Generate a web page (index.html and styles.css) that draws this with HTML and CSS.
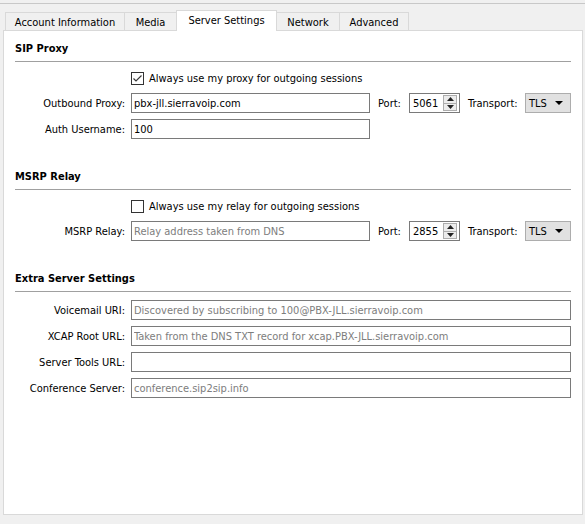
FILE: index.html
```html
<!DOCTYPE html>
<html lang="en">
<head>
<meta charset="utf-8">
<title>Account Settings</title>
<link rel="stylesheet" href="styles.css">
</head>
<body>
<div class="topline"></div>
<div class="tabbar">
  <div class="tab t-account">Account Information</div>
  <div class="tab t-media">Media</div>
  <div class="tab t-server active">Server Settings</div>
  <div class="tab t-network">Network</div>
  <div class="tab t-advanced">Advanced</div>
</div>
<div class="panel">
  <div class="section-title first">SIP Proxy</div>
  <div class="row check-row">
    <span class="spacer"></span>
    <span class="checkbox"><svg width="11" height="11" viewBox="0 0 11 11"><polyline points="1.5,5.5 4,8 9.5,2.5" fill="none" stroke="#3a3a3a" stroke-width="1.2"/></svg></span>
    <span class="check-text">Always use my proxy for outgoing sessions</span>
  </div>
  <div class="row gap5">
    <span class="lbl">Outbound Proxy:</span>
    <input class="field main" type="text" value="pbx-jll.sierravoip.com">
    <span class="port-lbl">Port:</span>
    <div class="spin"><span class="spin-val">5061</span><span class="spin-btns"><span class="sb up"><svg width="7" height="4" viewBox="0 0 7 4"><polygon points="0,4 7,4 3.5,0" fill="#222"/></svg></span><span class="sb down"><svg width="7" height="4" viewBox="0 0 7 4"><polygon points="0,0 7,0 3.5,4" fill="#222"/></svg></span></span></div>
    <span class="tr-lbl">Transport:</span>
    <div class="combo"><span>TLS</span><svg width="8" height="4" viewBox="0 0 8 4"><polygon points="0,0 8,0 4,4" fill="#000"/></svg></div>
  </div>
  <div class="row gap6">
    <span class="lbl">Auth Username:</span>
    <input class="field main" type="text" value="100">
  </div>

  <div class="section-title">MSRP Relay</div>
  <div class="row check-row">
    <span class="spacer"></span>
    <span class="checkbox"></span>
    <span class="check-text">Always use my relay for outgoing sessions</span>
  </div>
  <div class="row gap5">
    <span class="lbl">MSRP Relay:</span>
    <input class="field main" type="text" placeholder="Relay address taken from DNS">
    <span class="port-lbl">Port:</span>
    <div class="spin"><span class="spin-val">2855</span><span class="spin-btns"><span class="sb up"><svg width="7" height="4" viewBox="0 0 7 4"><polygon points="0,4 7,4 3.5,0" fill="#222"/></svg></span><span class="sb down"><svg width="7" height="4" viewBox="0 0 7 4"><polygon points="0,0 7,0 3.5,4" fill="#222"/></svg></span></span></div>
    <span class="tr-lbl">Transport:</span>
    <div class="combo"><span>TLS</span><svg width="8" height="4" viewBox="0 0 8 4"><polygon points="0,0 8,0 4,4" fill="#000"/></svg></div>
  </div>

  <div class="section-title">Extra Server Settings</div>
  <div class="row gap8">
    <span class="lbl">Voicemail URI:</span>
    <input class="field wide" type="text" placeholder="Discovered by subscribing to 100@PBX-JLL.sierravoip.com">
  </div>
  <div class="row gap6">
    <span class="lbl">XCAP Root URL:</span>
    <input class="field wide" type="text" placeholder="Taken from the DNS TXT record for xcap.PBX-JLL.sierravoip.com">
  </div>
  <div class="row gap6">
    <span class="lbl">Server Tools URL:</span>
    <input class="field wide" type="text">
  </div>
  <div class="row gap6">
    <span class="lbl">Conference Server:</span>
    <input class="field wide" type="text" placeholder="conference.sip2sip.info">
  </div>
</div>
</body>
</html>
```
FILE: styles.css
```css
* { box-sizing: border-box; }
html, body {
  margin: 0;
  padding: 0;
  background: #f0f0f0;
  width: 585px;
  height: 524px;
  overflow: hidden;
}
body {
  font-family: "DejaVu Sans Condensed", "DejaVu Sans", sans-serif;
  font-stretch: condensed;
  font-size: 11px;
  color: #000;
}
.topline {
  height: 4px;
  border-bottom: 1px solid #c8c8c8;
}
.tabbar {
  display: flex;
  align-items: flex-end;
  height: 26px;
  padding-left: 5px;
  position: relative;
  z-index: 2;
}
.tab {
  height: 18px;
  border: 1px solid #d9d9d9;
  border-bottom: none;
  background: #f0f0f0;
  margin-left: -1px;
  text-align: center;
  line-height: 17px;
  padding-top: 1px;
  white-space: nowrap;
}
.tab:first-child { margin-left: 0; }
.t-account { width: 120px; }
.t-media { width: 53px; }
.t-server { width: 101px; }
.t-network { width: 64px; }
.t-advanced { width: 70px; }
.tab.active {
  height: 21px;
  margin-bottom: -1px;
  background: #fff;
  line-height: 18px;
  padding-top: 1px;
  position: relative;
  z-index: 3;
}
.panel {
  margin-left: 3px;
  width: 580px;
  height: 485px;
  border: 1px solid #d9d9d9;
  background: #fff;
  padding: 0 11px;
  position: relative;
  z-index: 1;
}
.section-title {
  font-weight: bold;
  line-height: 16px;
  padding-top: 0;
  padding-bottom: 4px;
  border-bottom: 1px solid #a0a0a0;
  margin-top: 30px;
}
.section-title.first { margin-top: 10px; }
.row {
  display: flex;
  align-items: center;
  height: 20px;
  white-space: nowrap;
}
.check-row { margin-top: 6px; }
.gap5 { margin-top: 5px; }
.gap6 { margin-top: 6px; }
.gap8 { margin-top: 8px; }
.spacer { width: 116px; flex: none; }
.checkbox {
  width: 13px;
  height: 13px;
  border: 1px solid #333;
  background: #fff;
  flex: none;
  display: flex;
  align-items: center;
  justify-content: center;
}
.check-text { margin-left: 5px; }
.lbl {
  width: 110px;
  margin-right: 6px;
  text-align: right;
  flex: none;
}
.field {
  height: 20px;
  border: 1px solid #7a7a7a;
  padding: 0 2px;
  font: inherit;
  color: #000;
  background: #fff;
  outline: none;
  margin: 0;
}
.field::placeholder { color: #7d7d7d; opacity: 1; }
.field.main { width: 239px; flex: none; }
.field.wide { flex: 1; min-width: 0; }
.port-lbl { width: 31px; margin-left: 8px; flex: none; }
.tr-lbl { width: 57px; margin-left: 8px; flex: none; }
.spin {
  width: 51px;
  height: 20px;
  border: 1px solid #7a7a7a;
  display: flex;
  align-items: center;
  justify-content: space-between;
  padding: 1px 2px 1px 3px;
  flex: none;
}
.spin-btns {
  width: 14px;
  height: 16px;
  border: 1px solid #adadad;
  background: #ececec;
  display: flex;
  flex-direction: column;
}
.sb {
  flex: 1;
  display: flex;
  align-items: center;
  justify-content: center;
}
.sb.up { border-bottom: 1px solid #adadad; }
.combo {
  width: 46px;
  height: 20px;
  border: 1px solid #adadad;
  background: #e1e1e1;
  display: flex;
  align-items: center;
  justify-content: space-between;
  padding: 0 7px 0 3px;
  flex: none;
}
```
